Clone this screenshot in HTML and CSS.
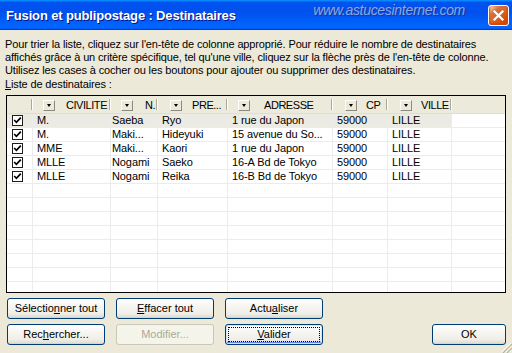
FILE: index.html
```html
<!DOCTYPE html>
<html lang="fr">
<head>
<meta charset="utf-8">
<title>Fusion et publipostage : Destinataires</title>
<link rel="stylesheet" href="styles.css">
</head>
<body>
<div class="window">
  <div class="titlebar">
    <span class="title">Fusion et publipostage : Destinataires</span>
    <span class="watermark">www.astucesinternet.com</span>
    <span class="close"><svg width="19" height="19" viewBox="0 0 19 19"><path d="M5.5 5.5 L13.5 13.5 M13.5 5.5 L5.5 13.5" stroke="#fff" stroke-width="2.2" stroke-linecap="square"/></svg></span>
  </div>
  <div class="content">
    <p class="intro">Pour trier la liste, cliquez sur l'en-tête de colonne approprié. Pour réduire le nombre de destinataires<br>affichés grâce à un critère spécifique, tel qu'une ville, cliquez sur la flèche près de l'en-tête de colonne.<br>Utilisez les cases à cocher ou les boutons pour ajouter ou supprimer des destinataires.</p>
    <div class="label"><u>L</u>iste de destinataires :</div>
    <div class="list">
      <div class="row head">
        <div class="hc"></div>
        <div class="hc h-civ"><span class="dd"></span><span class="ht">CIVILITE</span></div>
        <div class="hc h-nom"><span class="dd"></span><span class="ht">N.</span></div>
        <div class="hc h-pre"><span class="dd"></span><span class="ht">PRE...</span></div>
        <div class="hc h-adr"><span class="dd"></span><span class="ht">ADRESSE</span></div>
        <div class="hc h-cp"><span class="dd"></span><span class="ht">CP</span></div>
        <div class="hc h-vil"><span class="dd"></span><span class="ht">VILLE</span></div>
        <div class="hc last"></div>
      </div>

      <div class="row sel">
        <div class="c chk"><span class="box"><svg width="9" height="9" viewBox="0 0 9 9"><path d="M1.2 4 L3.4 6.3 L7.8 1.6" fill="none" stroke="#000" stroke-width="1.7"/></svg></span></div>
        <div class="c">M.</div><div class="c nom">Saeba</div><div class="c">Ryo</div><div class="c">1 rue du Japon</div><div class="c">59000</div><div class="c">LILLE</div><div class="c last"></div>
      </div>
      <div class="row">
        <div class="c chk"><span class="box"><svg width="9" height="9" viewBox="0 0 9 9"><path d="M1.2 4 L3.4 6.3 L7.8 1.6" fill="none" stroke="#000" stroke-width="1.7"/></svg></span></div>
        <div class="c">M.</div><div class="c nom">Maki...</div><div class="c">Hideyuki</div><div class="c">15 avenue du So...</div><div class="c">59000</div><div class="c">LILLE</div><div class="c last"></div>
      </div>
      <div class="row">
        <div class="c chk"><span class="box"><svg width="9" height="9" viewBox="0 0 9 9"><path d="M1.2 4 L3.4 6.3 L7.8 1.6" fill="none" stroke="#000" stroke-width="1.7"/></svg></span></div>
        <div class="c">MME</div><div class="c nom">Maki...</div><div class="c">Kaori</div><div class="c">1 rue du Japon</div><div class="c">59000</div><div class="c">LILLE</div><div class="c last"></div>
      </div>
      <div class="row">
        <div class="c chk"><span class="box"><svg width="9" height="9" viewBox="0 0 9 9"><path d="M1.2 4 L3.4 6.3 L7.8 1.6" fill="none" stroke="#000" stroke-width="1.7"/></svg></span></div>
        <div class="c">MLLE</div><div class="c nom">Nogami</div><div class="c">Saeko</div><div class="c">16-A Bd de Tokyo</div><div class="c">59000</div><div class="c">LILLE</div><div class="c last"></div>
      </div>
      <div class="row">
        <div class="c chk"><span class="box"><svg width="9" height="9" viewBox="0 0 9 9"><path d="M1.2 4 L3.4 6.3 L7.8 1.6" fill="none" stroke="#000" stroke-width="1.7"/></svg></span></div>
        <div class="c">MLLE</div><div class="c nom">Nogami</div><div class="c">Reika</div><div class="c">16-B Bd de Tokyo</div><div class="c">59000</div><div class="c">LILLE</div><div class="c last"></div>
      </div>

      <div class="row"><div class="c"></div><div class="c"></div><div class="c"></div><div class="c"></div><div class="c"></div><div class="c"></div><div class="c"></div><div class="c last"></div></div>
      <div class="row"><div class="c"></div><div class="c"></div><div class="c"></div><div class="c"></div><div class="c"></div><div class="c"></div><div class="c"></div><div class="c last"></div></div>
      <div class="row"><div class="c"></div><div class="c"></div><div class="c"></div><div class="c"></div><div class="c"></div><div class="c"></div><div class="c"></div><div class="c last"></div></div>
      <div class="row"><div class="c"></div><div class="c"></div><div class="c"></div><div class="c"></div><div class="c"></div><div class="c"></div><div class="c"></div><div class="c last"></div></div>
      <div class="row"><div class="c"></div><div class="c"></div><div class="c"></div><div class="c"></div><div class="c"></div><div class="c"></div><div class="c"></div><div class="c last"></div></div>
      <div class="row"><div class="c"></div><div class="c"></div><div class="c"></div><div class="c"></div><div class="c"></div><div class="c"></div><div class="c"></div><div class="c last"></div></div>
      <div class="row"><div class="c"></div><div class="c"></div><div class="c"></div><div class="c"></div><div class="c"></div><div class="c"></div><div class="c"></div><div class="c last"></div></div>
      <div class="row"><div class="c"></div><div class="c"></div><div class="c"></div><div class="c"></div><div class="c"></div><div class="c"></div><div class="c"></div><div class="c last"></div></div>
    </div>

    <div class="actions">
      <div class="btn-grid">
        <button class="btn">Sélectio<u>n</u>ner tout</button>
        <button class="btn"><u>E</u>ffacer tout</button>
        <button class="btn">Actu<u>a</u>liser</button>
        <button class="btn">Rec<u>h</u>ercher...</button>
        <button class="btn" disabled>Modifier...</button>
        <button class="btn focus"><u>V</u>alider</button>
      </div>
      <button class="btn ok">OK</button>
    </div>
  </div>
  <svg class="grip" width="12" height="12" viewBox="0 0 12 12">
    <path d="M11 2 L2 11 M11 6 L6 11 M11 10 L10 11" stroke="#fff" stroke-width="1"/>
    <path d="M12 3 L3 12 M12 7 L7 12" stroke="#B7B3A4" stroke-width="1.2"/>
  </svg>
</div>
</body>
</html>
```

FILE: styles.css
```css
html, body {
  margin: 0;
  padding: 0;
}

body {
  width: 512px;
  height: 353px;
  overflow: hidden;
  background: #ECE9D8;
  font-family: "Liberation Sans", Arial, sans-serif;
  font-size: 11px;
  color: #000;
}

.window {
  position: relative;
  width: 512px;
  height: 353px;
  background: #ECE9D8;
}

/* ---------- title bar ---------- */
.titlebar {
  height: 30px;
  box-sizing: border-box;
  display: flex;
  align-items: center;
  padding: 0 3px 0 6px;
  background: linear-gradient(180deg, #0997ff, #0053ee 8%, #0050ee 40%, #0066ff 88%, #0066ff 93%, #005bff 95%, #003dd7 96%, #003dd7);
}

.title {
  font-family: "Liberation Sans", Arial, sans-serif;
  font-weight: bold;
  font-size: 13px;
  letter-spacing: -0.15px;
  color: #fff;
  text-shadow: 1px 1px 0 #0f1089;
  white-space: nowrap;
}

.watermark {
  margin-left: auto;
  margin-right: 23px;
  align-self: flex-start;
  margin-top: 2px;
  font-style: italic;
  font-size: 14px;
  letter-spacing: -0.3px;
  color: #8EA8E4;
  text-shadow: 1px 1px 1px #13339a;
  white-space: nowrap;
}

.close {
  width: 21px;
  height: 21px;
  box-sizing: border-box;
  display: flex;
  align-items: center;
  justify-content: center;
  border: 1px solid #fff;
  border-radius: 3px;
  background: radial-gradient(circle at 90% 90%, #cc4600 0%, #dc6527 55%, #cd7546 70%, #ffccb2 90%, #fff 100%);
  box-shadow: inset 0 -1px 2px 1px #da4600;
}

/* ---------- content ---------- */
.content {
  padding: 8px 6px 0 5px;
}

.intro {
  margin: 0;
  line-height: 13px;
  letter-spacing: -0.14px;
  white-space: nowrap;
}

.label {
  margin-top: 1px;
  line-height: 13px;
  letter-spacing: -0.14px;
}

.list {
  margin-top: 4px;
  margin-left: 1px;
  height: 198px;
  box-sizing: border-box;
  border: 1px solid #000;
  background: #fff;
  overflow: hidden;
}

.row {
  display: grid;
  grid-template-columns: 26px 78px 47px 70px 105px 55px 64px 53px;
  height: 14px;
}

.row .c {
  box-sizing: border-box;
  height: 14px;
  border-right: 1px solid #ECECEC;
  border-bottom: 1px solid #ECECEC;
  padding-left: 4px;
  line-height: 13px;
  letter-spacing: -0.1px;
  white-space: nowrap;
  overflow: hidden;
}

.row .c.nom {
  padding-left: 1px;
}

.row .c.last {
  border-right: none;
}

.row.sel .c {
  background: #ECEBE3;
}

.row.sel .c.last {
  background: #fff;
}

.row .c.chk {
  padding-left: 5px;
  display: flex;
  align-items: center;
}

.box {
  width: 11px;
  height: 11px;
  box-sizing: border-box;
  border: 1px solid #1c1c1c;
  background: #fff;
  display: flex;
  align-items: center;
  justify-content: center;
}

/* header */
.row.head {
  height: 18px;
  background: #EBEADB;
  box-shadow: inset 0 -1px 0 #E2DECD, inset 0 -2px 0 #EBEADB;
}

.hc {
  position: relative;
  height: 18px;
  display: flex;
  align-items: center;
  white-space: nowrap;
  overflow: hidden;
}

.ht {
  letter-spacing: -0.45px;
}

.hc::after {
  content: "";
  position: absolute;
  right: 1px;
  top: 3px;
  bottom: 4px;
  width: 1px;
  background: #ACA899;
  box-shadow: 1px 0 0 #fff;
}

.hc.last::after {
  display: none;
}

.dd {
  width: 12px;
  height: 11px;
  box-sizing: border-box;
  margin-left: 10px;
  background: #ECE9D8;
  border: 1px solid;
  border-color: #fff #8C8A7E #8C8A7E #fff;
  position: relative;
  flex: none;
}

.dd::before {
  content: "";
  position: absolute;
  left: 2.5px;
  top: 3px;
  border-left: 2.5px solid transparent;
  border-right: 2.5px solid transparent;
  border-top: 3px solid #000;
}

.h-civ .ht { margin-left: 11px; }
.h-nom .ht { margin-left: 12px; }
.h-pre .dd { margin-left: 12px; }
.h-pre .ht { margin-left: 10px; }
.h-adr .ht { margin-left: 14px; }
.h-cp .dd { margin-left: 12px; }
.h-cp .ht { margin-left: 9px; }
.h-vil .dd { margin-left: 12px; }
.h-vil .ht { margin-left: 9px; }

/* ---------- buttons ---------- */
.actions {
  display: flex;
  align-items: flex-end;
  margin-top: 5px;
  margin-left: 2px;
}

.btn-grid {
  display: grid;
  grid-template-columns: 98px 98px 98px;
  grid-auto-rows: 21px;
  column-gap: 11px;
  row-gap: 5px;
}

.btn {
  box-sizing: border-box;
  height: 21px;
  padding: 0;
  border: 1px solid #003C74;
  border-radius: 3px;
  background: linear-gradient(180deg, #FFFFFF 0%, #F7F6F2 35%, #EFEEE8 75%, #E3E0D6 92%, #D6D0C5 100%);
  font-family: "Liberation Sans", Arial, sans-serif;
  font-size: 11px;
  color: #000;
  line-height: 19px;
  position: relative;
}

.btn:disabled {
  border-color: #C9C7BA;
  background: #F5F4EA;
  color: #ACA899;
}

.btn.focus {
  box-shadow: inset 0 0 0 1px #CEE7FF, inset 0 -1px 0 1px #6982EE;
  outline: 1px dotted #000;
  outline-offset: -4px;
}

.btn.ok {
  width: 74px;
  margin-left: auto;
}

.grip {
  position: absolute;
  right: 0;
  bottom: 0;
}
```
